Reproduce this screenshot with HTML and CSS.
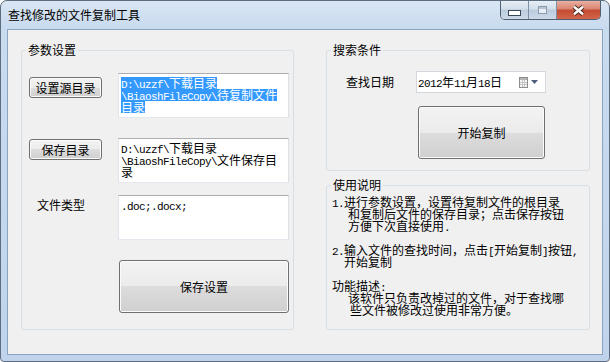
FILE: index.html
```html
<!DOCTYPE html>
<html lang="zh-CN">
<head>
  <meta charset="UTF-8">
  <title>查找修改的文件复制工具</title>
  <link rel="stylesheet" href="styles.css">
</head>
<body>

<div class="window">
  <div class="titlebar">
    <span class="title">查找修改的文件复制工具</span>
    <div class="caption-btns">
      <span class="cap cap-min">
        <svg width="13" height="6" viewBox="0 0 13 6"><rect x="0.5" y="0.5" width="12" height="5" fill="#fff" stroke="#394858"/></svg>
      </span>
      <span class="cap cap-max">
        <svg width="9" height="8" viewBox="0 0 9 8"><rect x="0.5" y="0.5" width="8" height="7" fill="#e8eef5" stroke="#8c9cae"/><path d="M1 2h7" stroke="#8c9cae"/></svg>
      </span>
      <span class="cap cap-close">
        <svg width="15" height="11" viewBox="0 0 15 11">
          <path d="M3 1.8L12 9.2M12 1.8L3 9.2" stroke="#4a2a22" stroke-width="4.4"/>
          <path d="M3 1.8L12 9.2M12 1.8L3 9.2" stroke="#fff" stroke-width="2.4"/>
        </svg>
      </span>
    </div>
  </div>

  <div class="client">
    <!-- 左侧：参数设置 -->
    <div class="group">
      <div class="legend">参数设置</div>

      <div class="row row-src">
        <div class="side"><button class="btn btn-small btn-src">设置源目录</button></div>
        <div class="textbox">
          <div class="sel"><span class="m">D:\uzzf\</span>下载目录</div>
          <div class="sel"><span class="m">\BiaoshFileCopy\</span>待复制文件</div>
          <div class="sel">目录</div>
        </div>
      </div>

      <div class="row row-dst">
        <div class="side"><button class="btn btn-small btn-dst">保存目录</button></div>
        <div class="textbox">
          <div><span class="m">D:\uzzf\</span>下载目录</div>
          <div><span class="m">\BiaoshFileCopy\</span>文件保存目</div>
          <div>录</div>
        </div>
      </div>

      <div class="row row-type">
        <div class="side"><span class="label">文件类型</span></div>
        <div class="textbox">
          <div><span class="m">.doc;.docx;</span></div>
        </div>
      </div>

      <button class="btn btn-big btn-save">保存设置</button>
    </div>

    <!-- 右侧 -->
    <div class="col-right">
      <div class="group">
        <div class="legend">搜索条件</div>
        <div class="field-row">
          <span class="field-label">查找日期</span>
          <div class="datepicker">
            <span><span class="m">2012</span>年<span class="m">11</span>月<span class="m">18</span>日</span>
            <svg class="cal" width="9" height="11" viewBox="0 0 9 11">
              <rect x="0.5" y="0.5" width="8" height="10" fill="#f6f6f6" stroke="#8d8d8d"/>
              <rect x="1" y="1" width="7" height="2" fill="#b4b4b4"/>
              <path d="M1 5.5h7M1 7.5h7M3.5 3v7M5.5 3v7" stroke="#c6c6c6"/>
            </svg>
            <svg class="arrow" width="7" height="4" viewBox="0 0 7 4"><path d="M0 0h7L3.5 4z" fill="#4e5f80"/></svg>
          </div>
        </div>
        <button class="btn btn-big btn-start">开始复制</button>
      </div>

      <div class="group group-help">
        <div class="legend">使用说明</div>
        <div class="help">
          <div><span class="m">1.</span>进行参数设置，设置待复制文件的根目录</div>
          <div class="ind">和复制后文件的保存目录；点击保存按钮</div>
          <div class="ind">方便下次直接使用<span class="m">.</span></div>
          <div class="para"><span class="m">2.</span>输入文件的查找时间，点击<span class="m">[</span>开始复制<span class="m">]</span>按钮<span class="m">,</span></div>
          <div class="ind-s">开始复制</div>
          <div class="para">功能描述<span class="m">:</span></div>
          <div class="ind">该软件只负责改掉过的文件，对于查找哪</div>
          <div class="ind-l">些文件被修改过使用非常方便。</div>
        </div>
      </div>
    </div>
  </div>
</div>

</body>
</html>
```

FILE: styles.css
```css
* { box-sizing: border-box; }
body {
  margin: 0;
  font: 12px "Noto Sans CJK SC", "Liberation Sans", sans-serif;
  color: #000;
  background: #fff;
}
.m {
  font: 11px "Liberation Mono", monospace;
  letter-spacing: -0.6px;
}

/* 窗口外框 */
.window {
  width: 610px;
  height: 362px;
  border: 1px solid #5d6d80;
  border-radius: 7px 7px 4px 4px;
  background: linear-gradient(#dae6f3, #c9dbef 26px, #bfd4ec);
  padding: 0 6px 6px;
  display: flex;
  flex-direction: column;
}
.titlebar {
  height: 28px;
  display: flex;
  align-items: flex-start;
}
.title {
  margin: 7px 0 0 1px;
  line-height: 14px;
}
.caption-btns {
  margin-left: auto;
  margin-right: 2px;
  display: flex;
  border: 1px solid #4f5f72;
  border-top: none;
  border-radius: 0 0 5px 5px;
  overflow: hidden;
}
.cap {
  height: 18px;
  display: flex;
  justify-content: center;
  align-items: flex-start;
}
.cap-min, .cap-max {
  width: 28px;
  border-right: 1px solid #7d90a6;
  background: linear-gradient(#e6eef6, #d3deea 45%, #bccbdd 50%, #cbd9e8);
}
.cap-min { padding-top: 9px; }
.cap-max { padding-top: 5px; }
.cap-close {
  width: 43px;
  padding-top: 4px;
  background: linear-gradient(#eab0a2, #d9836f 45%, #c34b31 50%, #d2664b);
}

/* 客户区 */
.client {
  flex: 1;
  background: #f0f0f0;
  border: 1px solid #8ba4c1;
  display: grid;
  grid-template-columns: 273px 264px;
  column-gap: 32px;
  padding: 20px 12px 24px 13px;
}
.group {
  border: 1px solid #d5dfe5;
  border-radius: 3px;
}
.legend {
  width: fit-content;
  margin: -8px 0 0 4px;
  padding: 0 2px;
  line-height: 14px;
  background: #f0f0f0;
}

/* 按钮 */
.btn {
  font: inherit;
  color: #000;
  border: 1px solid #707070;
  border-radius: 3px;
  background: linear-gradient(#f3f3f3, #ebebeb 50%, #dddddd 50%, #cfcfcf);
  box-shadow: inset 0 0 0 1px #fbfbfb;
  padding: 0;
  display: flex;
  align-items: center;
  justify-content: center;
  line-height: 14px;
}
.btn-small { width: 73px; height: 21px; margin-left: 7px; }
.btn-src { margin-top: 4px; }
.btn-dst { margin-top: 1px; }
.btn-big { height: 53px; }
.btn-save { width: 170px; margin: 20px 0 0 97px; }
.btn-start { width: 127px; margin: 13px 0 0 91px; }

/* 左侧行 */
.row { display: flex; align-items: flex-start; }
.row-src { margin-top: 16px; }
.row-dst { margin-top: 20px; }
.row-type { margin-top: 12px; }
.side { width: 96px; }
.label {
  display: block;
  margin: 3px 0 0 15px;
  line-height: 14px;
}
.textbox {
  width: 171px;
  height: 45px;
  background: #fff;
  border: 1px solid;
  border-color: #abadb3 #dbdfe6 #e3e9ef #e2e3ea;
  padding: 3px 2px 0;
  line-height: 12px;
  white-space: nowrap;
}
.textbox > div { height: 12px; }
.sel {
  width: fit-content;
  background: #3399ff;
  color: #fff;
}

/* 右侧 */
.col-right {
  display: flex;
  flex-direction: column;
  gap: 14px;
}
.col-right .group { padding-bottom: 11px; }
.group-help { flex: 1; }
.field-row {
  display: flex;
  align-items: center;
  margin-top: 14px;
  padding-left: 19px;
}
.field-label {
  width: 48px;
  margin-right: 22px;
  line-height: 14px;
}
.datepicker {
  width: 130px;
  height: 22px;
  background: #fff;
  border: 1px solid #d3d8de;
  display: flex;
  align-items: center;
  padding: 0 7px 0 1px;
  line-height: 14px;
}
.cal { margin-left: auto; }
.arrow { margin-left: 3px; }

.help {
  margin: 4px 0 0 5px;
  line-height: 12px;
  white-space: nowrap;
}
.help > div { height: 12px; }
.help .ind { padding-left: 16px; }
.help .ind-s { padding-left: 12px; }
.help .ind-l { padding-left: 18px; }
.help .para { margin-top: 12px; }
```
